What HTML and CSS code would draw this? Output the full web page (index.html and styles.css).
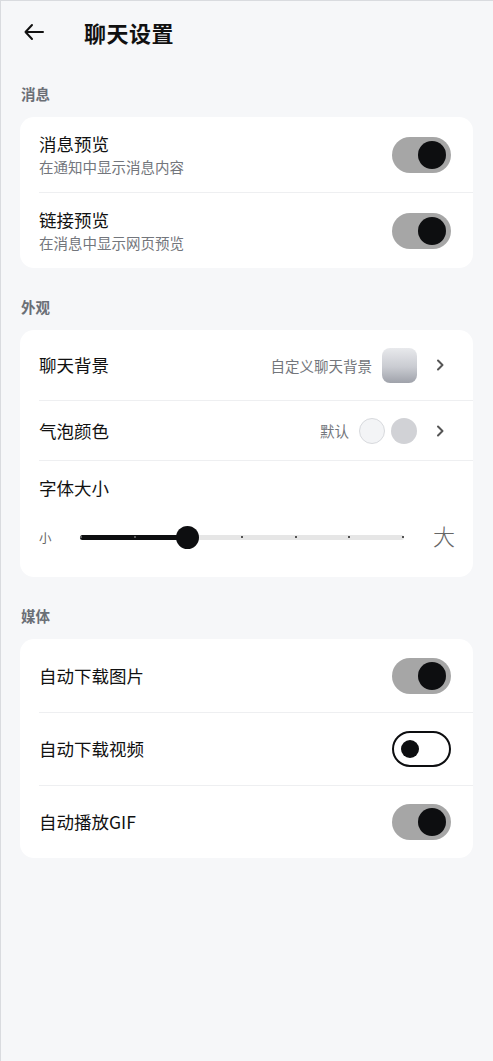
FILE: index.html
```html
<!DOCTYPE html>
<html lang="zh-CN">
<head>
    <meta charset="UTF-8">
    <meta name="viewport" content="width=device-width, initial-scale=1.0">
    <title>聊天设置</title>
    <link rel="stylesheet" href="styles.css">
</head>
<body>
    <div class="screen">
        <header class="header">
            <button class="back" aria-label="返回">
                <svg width="20" height="20" viewBox="0 0 20 20" fill="none" stroke="#111" stroke-width="2" stroke-linecap="round" stroke-linejoin="round">
                    <path d="M19 10H1.5M8 3L1.5 10L8 17"/>
                </svg>
            </button>
            <h1 class="title">聊天设置</h1>
        </header>

        <!-- 消息 -->
        <section class="group">
            <h2 class="group-label">消息</h2>
            <div class="card">
                <div class="row row-tall">
                    <div class="row-text">
                        <div class="row-title">消息预览</div>
                        <div class="row-sub">在通知中显示消息内容</div>
                    </div>
                    <span class="toggle on"><span class="knob"></span></span>
                </div>
                <div class="row row-tall">
                    <div class="row-text">
                        <div class="row-title">链接预览</div>
                        <div class="row-sub">在消息中显示网页预览</div>
                    </div>
                    <span class="toggle on"><span class="knob"></span></span>
                </div>
            </div>
        </section>

        <!-- 外观 -->
        <section class="group">
            <h2 class="group-label">外观</h2>
            <div class="card">
                <div class="row row-bg">
                    <div class="row-title">聊天背景</div>
                    <div class="row-end">
                        <span class="row-value">自定义聊天背景</span>
                        <span class="wallpaper"></span>
                        <svg class="chevron" width="10" height="14" viewBox="0 0 10 14" fill="none" stroke="#555" stroke-width="2" stroke-linecap="round" stroke-linejoin="round">
                            <path d="M3 2.5L7.5 7L3 11.5"/>
                        </svg>
                    </div>
                </div>
                <div class="row row-bubble">
                    <div class="row-title">气泡颜色</div>
                    <div class="row-end">
                        <span class="row-value">默认</span>
                        <span class="dots">
                            <span class="dot dot-light"></span>
                            <span class="dot dot-gray"></span>
                        </span>
                        <svg class="chevron" width="10" height="14" viewBox="0 0 10 14" fill="none" stroke="#555" stroke-width="2" stroke-linecap="round" stroke-linejoin="round">
                            <path d="M3 2.5L7.5 7L3 11.5"/>
                        </svg>
                    </div>
                </div>
                <div class="row row-font">
                    <div class="row-title">字体大小</div>
                    <div class="slider">
                        <span class="slider-min">小</span>
                        <div class="track">
                            <div class="track-fill" style="width: 33.33%"></div>
                            <div class="ticks">
                                <span class="tick dark"></span>
                                <span class="tick dark"></span>
                                <span class="tick"></span>
                                <span class="tick"></span>
                                <span class="tick"></span>
                                <span class="tick"></span>
                                <span class="tick"></span>
                            </div>
                            <div class="thumb" style="left: 33.33%"></div>
                        </div>
                        <span class="slider-max">大</span>
                    </div>
                </div>
            </div>
        </section>

        <!-- 媒体 -->
        <section class="group">
            <h2 class="group-label">媒体</h2>
            <div class="card">
                <div class="row row-media">
                    <div class="row-title">自动下载图片</div>
                    <span class="toggle on"><span class="knob"></span></span>
                </div>
                <div class="row row-media">
                    <div class="row-title">自动下载视频</div>
                    <span class="toggle off"><span class="knob"></span></span>
                </div>
                <div class="row row-media">
                    <div class="row-title">自动播放GIF</div>
                    <span class="toggle on"><span class="knob"></span></span>
                </div>
            </div>
        </section>
    </div>
</body>
</html>
```

FILE: styles.css
```css
* {
    box-sizing: border-box;
}
body {
    margin: 0;
    background-color: #f6f7f9;
    font-family: "Noto Sans CJK SC", "Noto Sans", sans-serif;
    color: #111;
}
.screen {
    min-height: 1061px;
    border-top: 1px solid #d9dbdf;
    border-left: 1px solid #d9dbdf;
    padding: 0 20px 40px 19px;
}

/* ヘッダー */
.header {
    display: flex;
    align-items: center;
    height: 54px;
    padding-top: 8px;
}
.back {
    display: flex;
    align-items: center;
    justify-content: center;
    width: 20px;
    height: 20px;
    margin-left: 4px;
    padding: 0;
    border: none;
    background: none;
}
.title {
    margin: 0 0 0 40px;
    font-size: 22px;
    font-weight: 700;
    line-height: 30px;
    letter-spacing: 0.5px;
}

/* グループ */
.group {
    padding-top: 29px;
}
.group-label {
    margin: 0 0 13px 1px;
    font-size: 14.5px;
    font-weight: 700;
    line-height: 20px;
    color: #6b6f76;
}
.card {
    background-color: #fff;
    border-radius: 14px;
}

/* 行 */
.row {
    display: flex;
    align-items: center;
    justify-content: space-between;
    margin-left: 19px;
    padding-right: 22px;
}
.row + .row {
    border-top: 1px solid #eeeff1;
}
.row-tall {
    padding-top: 16px;
    padding-bottom: 16px;
}
.row-text {
    display: flex;
    flex-direction: column;
    gap: 3px;
}
.row-title {
    font-size: 17.5px;
    line-height: 22px;
}
.row-sub {
    font-size: 14.5px;
    line-height: 18px;
    color: #73767c;
}
.row-bg {
    height: 70px;
}
.row-bubble {
    height: 60px;
}
.row-media {
    height: 73px;
}
.row-end {
    display: flex;
    align-items: center;
}
.row-value {
    font-size: 14.5px;
    color: #73767c;
    margin-right: 10px;
}
.chevron {
    margin-left: 18px;
    margin-right: 6px;
}
.wallpaper {
    width: 35px;
    height: 35px;
    border-radius: 8px;
    background: linear-gradient(180deg, #e8e9ec 0%, #c9cbd1 55%, #9fa2aa 100%);
}
.dots {
    display: flex;
    gap: 6px;
}
.dot {
    width: 26px;
    height: 26px;
    border-radius: 50%;
}
.dot-light {
    background-color: #f3f4f6;
    border: 1px solid #d7d9dd;
}
.dot-gray {
    background-color: #d1d2d6;
}

/* スイッチ */
.toggle {
    position: relative;
    display: inline-block;
    width: 59px;
    height: 36px;
    border-radius: 18px;
    flex-shrink: 0;
}
.toggle.on {
    background-color: #a6a6a6;
}
.toggle.on .knob {
    position: absolute;
    top: 4px;
    right: 5px;
    width: 28px;
    height: 28px;
    border-radius: 50%;
    background-color: #0d0e10;
}
.toggle.off {
    background-color: #fff;
    border: 2px solid #0d0e10;
}
.toggle.off .knob {
    position: absolute;
    top: 7px;
    left: 7px;
    width: 18px;
    height: 18px;
    border-radius: 50%;
    background-color: #0d0e10;
}

/* 文字サイズ */
.row-font {
    flex-direction: column;
    align-items: stretch;
    padding-top: 16px;
    padding-bottom: 28px;
}
.slider {
    display: flex;
    align-items: center;
    height: 24px;
    margin-top: 26px;
}
.slider-min {
    width: 41px;
    font-size: 12.5px;
    color: #666;
}
.slider-max {
    margin-left: 29px;
    margin-right: -4px;
    margin-top: -4px;
    font-size: 22px;
    line-height: 24px;
    font-weight: 300;
    color: #666;
}
.track {
    position: relative;
    flex: 1;
    height: 5px;
    border-radius: 3px;
    background-color: #e6e6e6;
}
.track-fill {
    position: absolute;
    top: 0;
    bottom: 0;
    left: 0;
    border-radius: 3px;
    background-color: #0d0e10;
}
.ticks {
    position: absolute;
    top: 1.5px;
    left: 0;
    right: 0;
    display: flex;
    justify-content: space-between;
}
.tick {
    width: 2px;
    height: 2px;
    border-radius: 50%;
    background-color: #222;
}
.tick.dark {
    background-color: #777;
}
.thumb {
    position: absolute;
    top: 50%;
    width: 23px;
    height: 23px;
    margin: -11.5px 0 0 -11.5px;
    border-radius: 50%;
    background-color: #0d0e10;
}
```
